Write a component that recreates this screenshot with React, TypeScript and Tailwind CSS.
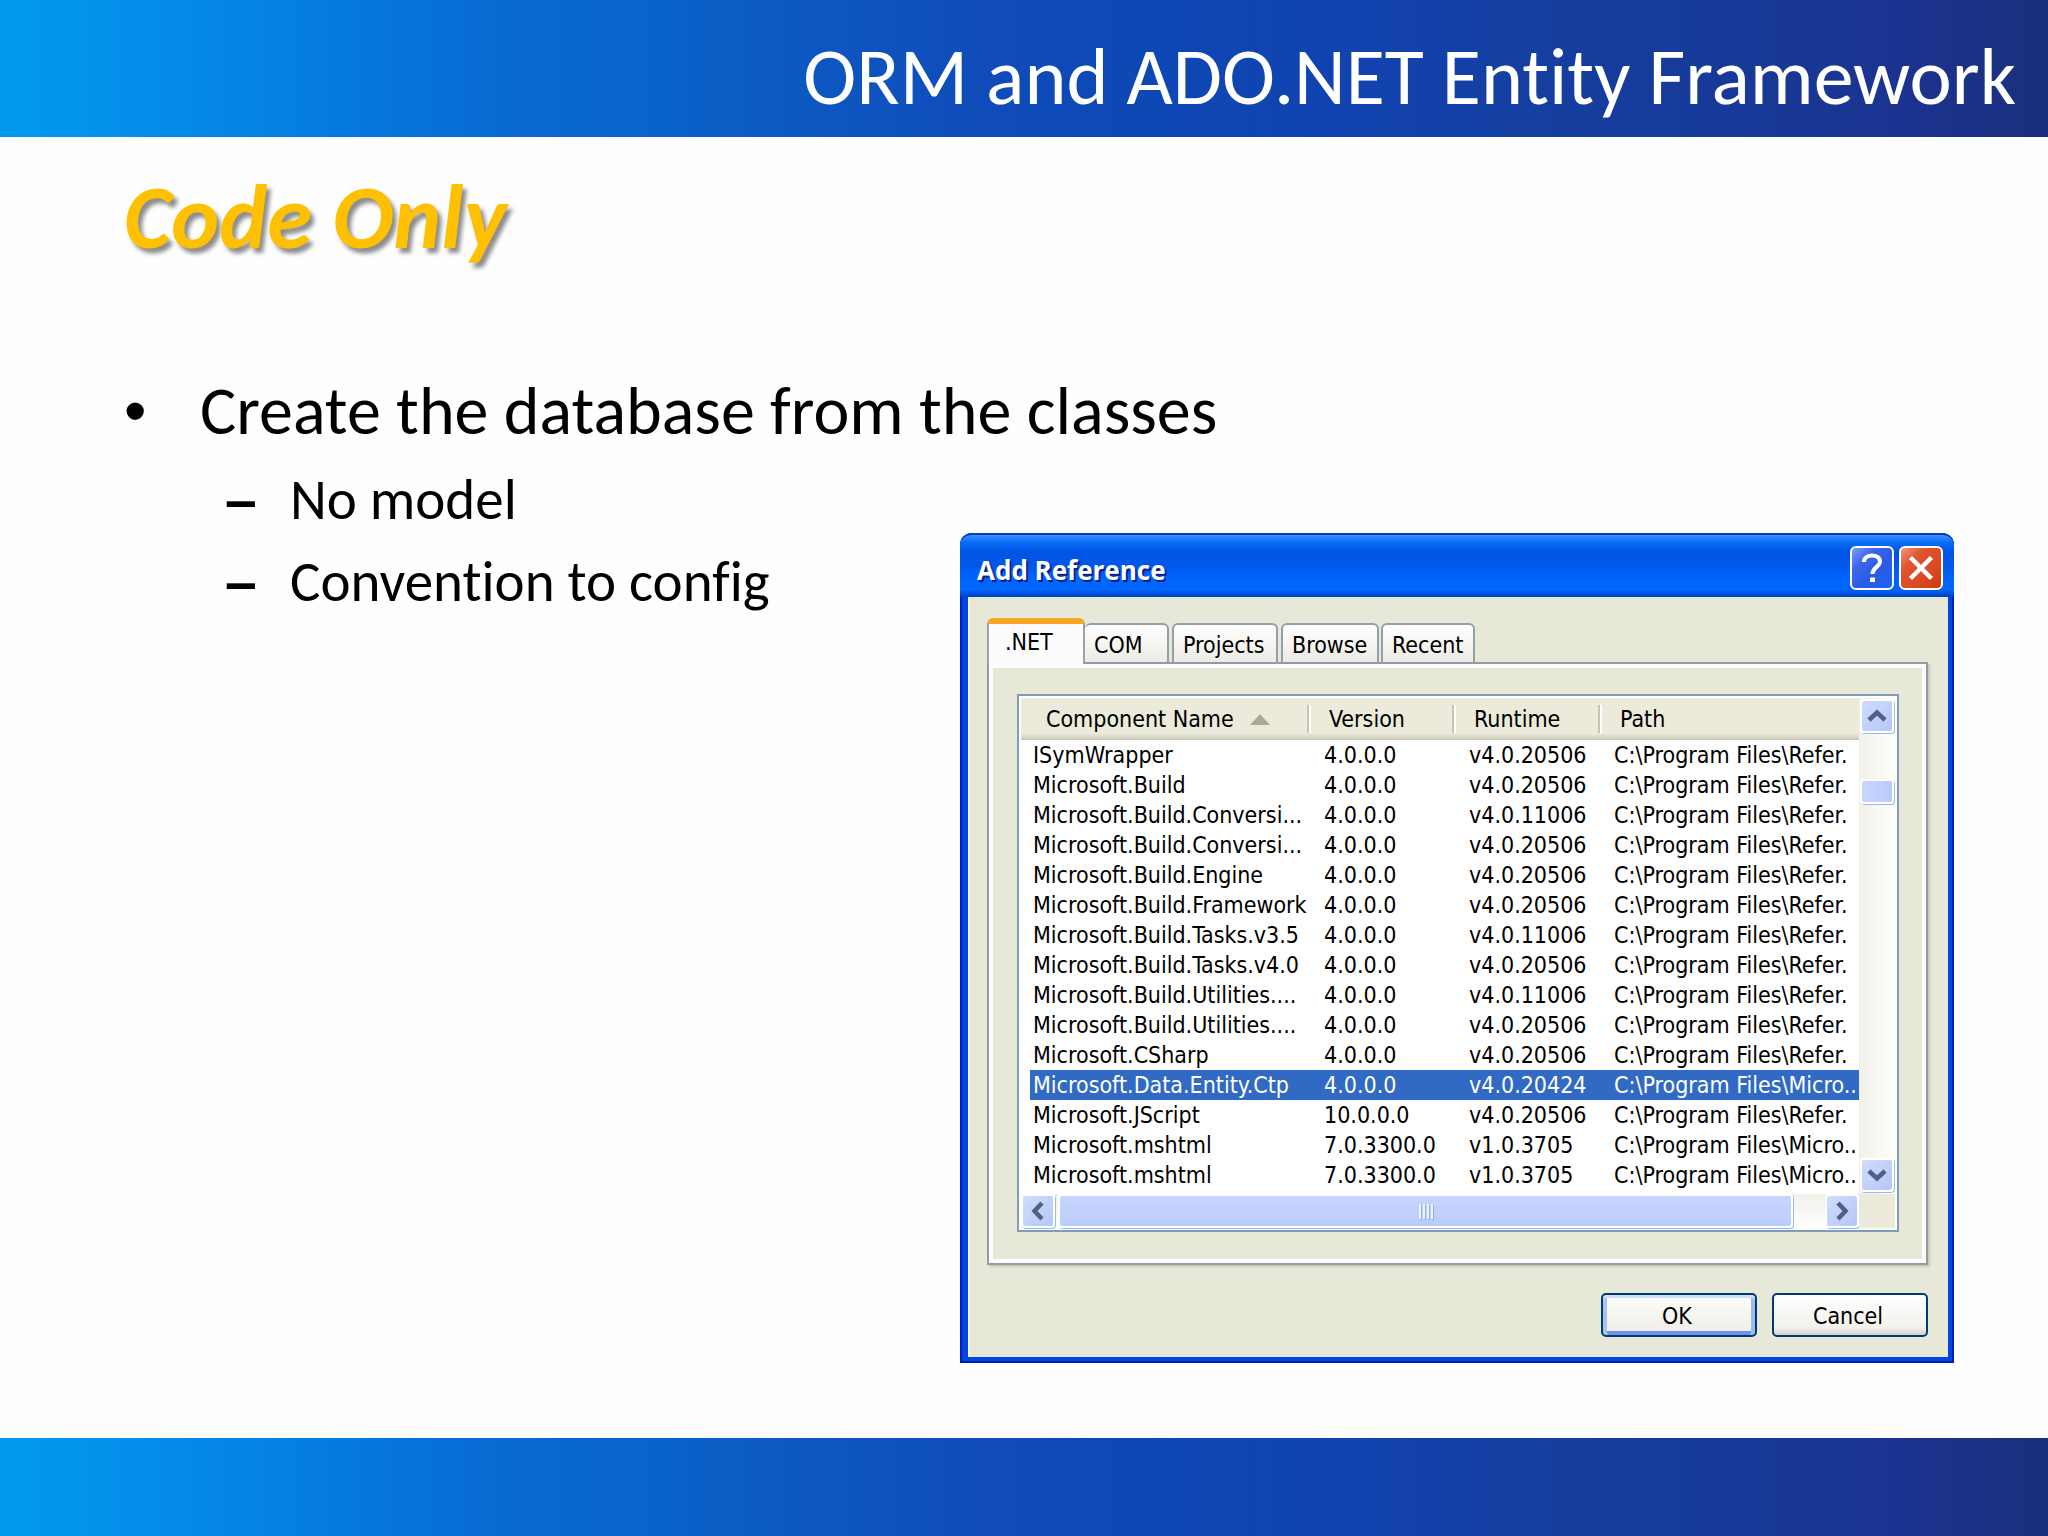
import React from "react";

const rows: [string, string, string, string][] = [
  ["ISymWrapper", "4.0.0.0", "v4.0.20506", "C:\\Program Files\\Refer."],
  ["Microsoft.Build", "4.0.0.0", "v4.0.20506", "C:\\Program Files\\Refer."],
  ["Microsoft.Build.Conversi...", "4.0.0.0", "v4.0.11006", "C:\\Program Files\\Refer."],
  ["Microsoft.Build.Conversi...", "4.0.0.0", "v4.0.20506", "C:\\Program Files\\Refer."],
  ["Microsoft.Build.Engine", "4.0.0.0", "v4.0.20506", "C:\\Program Files\\Refer."],
  ["Microsoft.Build.Framework", "4.0.0.0", "v4.0.20506", "C:\\Program Files\\Refer."],
  ["Microsoft.Build.Tasks.v3.5", "4.0.0.0", "v4.0.11006", "C:\\Program Files\\Refer."],
  ["Microsoft.Build.Tasks.v4.0", "4.0.0.0", "v4.0.20506", "C:\\Program Files\\Refer."],
  ["Microsoft.Build.Utilities....", "4.0.0.0", "v4.0.11006", "C:\\Program Files\\Refer."],
  ["Microsoft.Build.Utilities....", "4.0.0.0", "v4.0.20506", "C:\\Program Files\\Refer."],
  ["Microsoft.CSharp", "4.0.0.0", "v4.0.20506", "C:\\Program Files\\Refer."],
  ["Microsoft.Data.Entity.Ctp", "4.0.0.0", "v4.0.20424", "C:\\Program Files\\Micro.."],
  ["Microsoft.JScript", "10.0.0.0", "v4.0.20506", "C:\\Program Files\\Refer."],
  ["Microsoft.mshtml", "7.0.3300.0", "v1.0.3705", "C:\\Program Files\\Micro.."],
  ["Microsoft.mshtml", "7.0.3300.0", "v1.0.3705", "C:\\Program Files\\Micro.."],
];
const selectedRow = 11;

const band =
  "bg-[linear-gradient(90deg,#009bee_0%,#0490ea_6%,#0579de_17%,#086bd2_24%,#0963ca_32%,#0d58c2_39%,#0f4cba_48%,#0d48b4_56%,#1143b0_65%,#153e9f_76%,#173a98_84%,#1b3390_93%,#1a2f7c_100%)]";

function Chevron({ className }: { className: string }) {
  return (
    <svg viewBox="0 0 20 14" className={className} aria-hidden="true">
      <path d="M2 11 L10 3.5 L18 11" fill="none" stroke="#4d6185" strokeWidth="4.5" />
    </svg>
  );
}

function ScrollButton({ label, turn }: { label: string; turn: string }) {
  return (
    <button
      type="button"
      aria-label={label}
      className="flex size-[34px] shrink-0 items-center justify-center rounded-[4px] border-2 border-white bg-linear-to-br from-[#cfdcfd] to-[#b4c8f6] shadow-[1px_1px_0_#9db8ea]"
    >
      <Chevron className={turn} />
    </button>
  );
}

function Tab({ children, className }: { children: string; className: string }) {
  return (
    <button
      type="button"
      role="tab"
      aria-selected={false}
      className={
        "h-[39px] rounded-t-[6px] border-2 border-b-0 border-[#91a0ab] bg-linear-to-b from-white to-[#ecebe4] pl-[9px] text-left leading-[40px] " +
        className
      }
    >
      {children}
    </button>
  );
}

function Separator() {
  return <span className="h-7 w-1 border-l-2 border-[#c7c5b2] bg-white" />;
}

function Dialog() {
  return (
    <section
      role="dialog"
      aria-label="Add Reference"
      className="mt-[164px] self-start rounded-t-[12px] border-b-2 border-[#001fa8] bg-[#0046e0] pr-[6px] pb-1 pl-2 font-['DejaVu_Sans_Condensed','DejaVu_Sans',sans-serif] text-[23px] text-black shadow-[inset_2px_0_0_#0020c8,inset_-2px_0_0_#0020b8]"
    >
      <header className="-mr-[6px] -ml-2 flex h-16 items-center justify-between rounded-t-[12px] border-t-2 border-[#0a3fc0] bg-[linear-gradient(180deg,#3c92ff_0%,#0a6cf8_12%,#0054e3_28%,#0058ea_50%,#0066ff_72%,#0066fc_88%,#003fc4_100%)] pt-1 pr-[11px] pl-[17px]">
        <h3 className="pt-1 font-['Open_Sans',sans-serif] text-[26px] font-bold text-white [text-shadow:2px_2px_0_#0a1f8a]">
          Add Reference
        </h3>
        <div className="flex gap-[5px]">
          <button
            type="button"
            aria-label="Help"
            className="flex size-11 items-center justify-center rounded-[6px] border-2 border-white bg-[linear-gradient(135deg,#7e9bf8_0%,#3b66ea_30%,#2a5be6_60%,#1c62f4_100%)]"
          >
            <svg viewBox="0 0 24 30" className="h-[30px] w-6" aria-hidden="true">
              <path d="M4 9 C4 0.5 20 0.5 20 8.5 C20 14 12.5 14 12.5 21" fill="none" stroke="#fff" strokeWidth="4" />
              <rect x="10" y="24.5" width="5" height="4.5" fill="#fff" />
            </svg>
          </button>
          <button
            type="button"
            aria-label="Close"
            className="flex size-11 items-center justify-center rounded-[6px] border-2 border-white bg-[linear-gradient(135deg,#f0977c_0%,#de5530_30%,#dc4a22_65%,#cc3a10_100%)]"
          >
            <svg viewBox="0 0 26 26" className="size-[26px]" aria-hidden="true">
              <path d="M2.5 2.5 L23.5 23.5 M23.5 2.5 L2.5 23.5" stroke="#fff" strokeWidth="4.5" />
            </svg>
          </button>
        </div>
      </header>

      <div className="border-l-2 border-[#f4f1e6] bg-[#e8e8d8] pt-[21px] pr-5 pb-5 pl-[17px]">
        <div role="tablist" className="flex h-11 items-end">
          <button
            type="button"
            role="tab"
            aria-selected={true}
            className="relative z-10 -mb-[2px] h-[46px] w-[98px] rounded-t-[6px] border-x-2 border-t-[6px] border-x-[#9aa3a8] border-t-[#f5a623] bg-[#fcfcfe] pb-1 pl-4 text-left leading-[34px]"
          >
            .NET
          </button>
          <Tab className="w-[84px] border-l-0">COM</Tab>
          <Tab className="ml-[3px] w-[106px]">Projects</Tab>
          <Tab className="ml-[3px] w-[98px]">Browse</Tab>
          <Tab className="ml-[2px] w-[94px]">Recent</Tab>
        </div>

        <div className="border-2 border-[#949aa0] bg-[#e8e8d8] shadow-[2px_2px_2px_#c9c8b8]">
          <div className="border-4 border-[#fcfcfe] pt-[26px] pr-[23px] pb-[27px] pl-6">
            <div className="grid grid-cols-[minmax(0,1fr)_36px] border-2 border-[#7f9db9] bg-white p-[2px]">
              <div className="pb-1">
                <table className="w-full table-fixed border-collapse text-left">
                  <colgroup>
                    <col className="w-[290px]" />
                    <col className="w-[145px]" />
                    <col className="w-[146px]" />
                    <col />
                  </colgroup>
                  <thead>
                    <tr className="h-[42px] bg-[linear-gradient(180deg,#ebeadb_0%,#ebeadb_84%,#cbc7b8_100%)]">
                      <th className="p-0 font-normal">
                        <div className="flex items-center justify-between pl-[25px]">
                          <span className="flex items-center gap-4 whitespace-nowrap">
                            Component Name
                            <svg viewBox="0 0 20 11" className="h-[11px] w-5" aria-hidden="true">
                              <path d="M10 0 L20 11 L0 11 Z" fill="#aca899" />
                            </svg>
                          </span>
                          <Separator />
                        </div>
                      </th>
                      <th className="p-0 font-normal">
                        <div className="flex items-center justify-between pl-[18px]">
                          Version
                          <Separator />
                        </div>
                      </th>
                      <th className="p-0 font-normal">
                        <div className="flex items-center justify-between pl-[18px]">
                          Runtime
                          <Separator />
                        </div>
                      </th>
                      <th className="p-0 pl-[18px] font-normal">Path</th>
                    </tr>
                  </thead>
                  <tbody>
                    {rows.map(([name, version, runtime, path], i) => {
                      const fill = i === selectedRow ? "bg-[#316ac5] text-white" : "";
                      return (
                        <tr key={i} className="h-[30px] leading-[30px] whitespace-nowrap">
                          <td className="p-0">
                            <div className={"ml-[9px] pl-[3px] " + fill}>{name}</div>
                          </td>
                          <td className={"p-0 pl-[13px] " + fill}>{version}</td>
                          <td className={"p-0 pl-[13px] " + fill}>{runtime}</td>
                          <td className={"p-0 pl-3 " + fill}>{path}</td>
                        </tr>
                      );
                    })}
                  </tbody>
                </table>
              </div>

              <div className="flex flex-col items-center bg-linear-to-r from-[#f1f0ea] to-[#fefefc] pt-[1px] pb-[2px]">
                <ScrollButton label="Scroll up" turn="h-[14px] w-5" />
                <div className="mt-[46px] h-[25px] w-[34px] rounded-[4px] border-2 border-white bg-linear-to-r from-[#c9d7fd] to-[#b9cbf8] shadow-[1px_1px_0_#9db8ea]" />
                <div className="flex-1" />
                <ScrollButton label="Scroll down" turn="h-[14px] w-5 rotate-180" />
              </div>

              <div className="flex items-center bg-linear-to-b from-[#f1f0ea] to-[#fefefc]">
                <ScrollButton label="Scroll left" turn="h-[14px] w-5 -rotate-90" />
                <div className="ml-[3px] flex h-[34px] flex-1 items-center justify-center gap-[2px] rounded-[4px] border-2 border-white bg-linear-to-b from-[#c9d5fe] to-[#b9cdfb] shadow-[1px_1px_0_#9db8ea]">
                  <span className="h-[15px] w-[2px] bg-[#eef4fe] shadow-[1px_1px_0_#8cb0f8]" />
                  <span className="h-[15px] w-[2px] bg-[#eef4fe] shadow-[1px_1px_0_#8cb0f8]" />
                  <span className="h-[15px] w-[2px] bg-[#eef4fe] shadow-[1px_1px_0_#8cb0f8]" />
                  <span className="h-[15px] w-[2px] bg-[#eef4fe] shadow-[1px_1px_0_#8cb0f8]" />
                </div>
                <div className="w-8" />
                <ScrollButton label="Scroll right" turn="h-[14px] w-5 rotate-90" />
              </div>
              <div className="bg-[#ebeadb]" />
            </div>
          </div>
        </div>

        <div className="mt-7 flex justify-end gap-[15px]">
          <button
            type="button"
            className="h-11 w-[156px] rounded-[5px] border-2 border-[#003c74] bg-linear-to-b from-[#fdfdfb] to-[#eeede6] pt-[2px] pr-1 shadow-[inset_0_3px_0_#cee0fc,inset_4px_0_0_#a9c2f2,inset_-4px_0_0_#a0baf0,inset_0_-4px_0_#6f92e4]"
          >
            OK
          </button>
          <button
            type="button"
            className="h-11 w-[156px] rounded-[5px] border-2 border-[#003c74] bg-[linear-gradient(180deg,#ffffff_0%,#f2f1ec_82%,#d6d0c5_100%)] pt-[2px] pr-1"
          >
            Cancel
          </button>
        </div>
      </div>
    </section>
  );
}

export default function App() {
  return (
    <div className="flex min-h-screen flex-col bg-[#fefefe] font-[Calibri,Carlito,Lato,sans-serif] text-black [font-variant-ligatures:none]">
      <header className={"flex h-[137px] items-center justify-end pt-4 pr-8 " + band}>
        <h1 className="text-[80px] leading-none whitespace-nowrap text-white">ORM and ADO.NET Entity Framework</h1>
      </header>

      <main className="flex-1">
        <h2 className="pt-9 pl-[124px] text-[91px] leading-[88px] font-bold text-[#ffc000] italic [text-shadow:4px_5px_4px_rgba(0,0,0,0.45)]">
          Code Only
        </h2>
        <div className="mt-[108px] grid grid-cols-[minmax(0,480fr)_minmax(0,497fr)_minmax(0,47fr)]">
          <ul className="pt-[2px] pl-[124px] text-[68px] leading-[80px] whitespace-nowrap">
            <li className="flex">
              <span className="w-[76px] shrink-0 font-['Liberation_Sans',sans-serif] text-[64px]" aria-hidden="true">
                •
              </span>
              <div>
                Create the database from the classes
                <ul className="mt-2 text-[57px] leading-[82px]">
                  <li className="flex">
                    <span className="ml-[25px] w-[65px] shrink-0 font-['Liberation_Sans',sans-serif] font-bold" aria-hidden="true">
                      –
                    </span>
                    No model
                  </li>
                  <li className="flex">
                    <span className="ml-[25px] w-[65px] shrink-0 font-['Liberation_Sans',sans-serif] font-bold" aria-hidden="true">
                      –
                    </span>
                    Convention to config
                  </li>
                </ul>
              </div>
            </li>
          </ul>
          <Dialog />
        </div>
      </main>

      <footer className={"h-[98px] " + band} />
    </div>
  );
}
